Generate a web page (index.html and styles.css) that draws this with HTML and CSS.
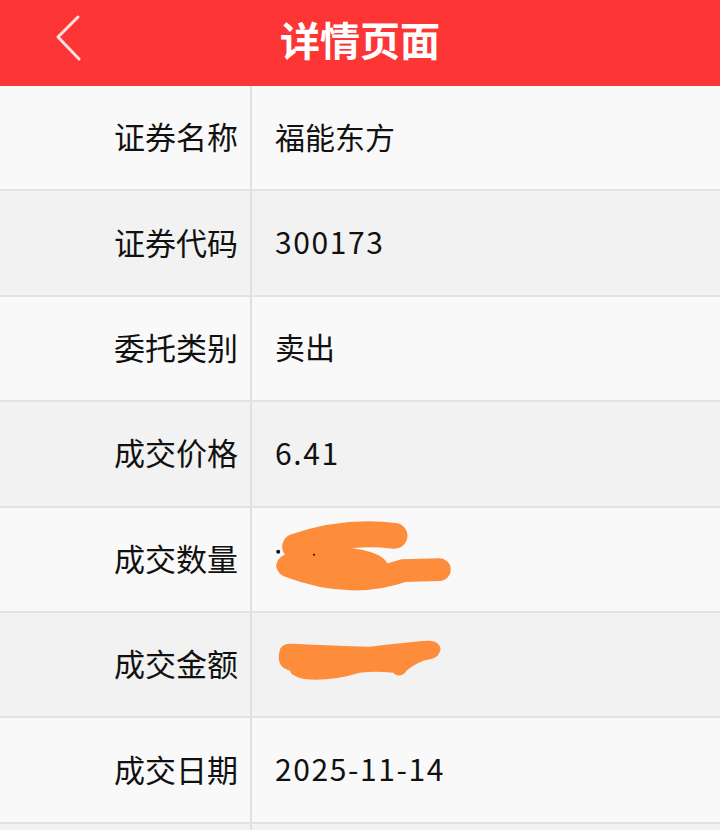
FILE: index.html
```html
<!DOCTYPE html>
<html lang="zh-CN">
<head>
    <meta charset="UTF-8">
    <meta name="viewport" content="width=device-width, initial-scale=1.0">
    <title>详情页面</title>
    <link rel="stylesheet" href="styles.css">
</head>
<body>
    <!-- Top bar -->
    <div class="header">
        <a href="javascript:void(0);" class="back">
            <svg width="40" height="54" viewBox="0 0 40 54">
                <polyline points="28,5 8,25 29,47" fill="none" stroke="#fde2e2" stroke-width="3" stroke-linecap="round" stroke-linejoin="round"/>
            </svg>
        </a>
        <h1>详情页面</h1>
        <div></div>
    </div>

    <!-- Detail rows -->
    <div class="details">
        <div class="row">
            <div class="label">证券名称</div>
            <div class="value">福能东方</div>
        </div>
        <div class="row">
            <div class="label">证券代码</div>
            <div class="value num">300173</div>
        </div>
        <div class="row">
            <div class="label">委托类别</div>
            <div class="value">卖出</div>
        </div>
        <div class="row">
            <div class="label">成交价格</div>
            <div class="value num">6.41</div>
        </div>
        <div class="row">
            <div class="label">成交数量</div>
            <div class="value">
                <svg class="scribble" viewBox="0 0 466 104">
                    <path d="M41 39 Q90 22 141 28" fill="none" stroke="#fd8c3b" stroke-width="26" stroke-linecap="round"/>
                    <ellipse cx="78" cy="58" rx="56" ry="19" fill="#fd8c3b"/>
                    <path d="M34 58 Q95 82 150 63 L186 62" fill="none" stroke="#fd8c3b" stroke-width="23" stroke-linecap="round"/>
                    <circle cx="24" cy="44" r="2" fill="#111"/>
                    <circle cx="60" cy="47" r="1" fill="#111"/>
                </svg>
            </div>
        </div>
        <div class="row">
            <div class="label">成交金额</div>
            <div class="value">
                <svg class="scribble" viewBox="0 0 466 104">
                    <path d="M26 36 C30 30 36 31 39 31 Q80 33 116 34 Q150 30 173 28 C184 27 190 34 186 40 C184 46 178 46 170 48 Q160 52 153 58 C150 64 142 64 140 60 Q120 58 106 60 Q80 68 56 67 C44 66 36 62 36 58 C26 56 22 48 26 36 Z" fill="#fd8c3b"/>
                </svg>
            </div>
        </div>
        <div class="row">
            <div class="label">成交日期</div>
            <div class="value num">2025-11-14</div>
        </div>
        <div class="row">
            <div class="label"></div>
            <div class="value"></div>
        </div>
    </div>
</body>
</html>
```
FILE: styles.css
```css
body {
    margin: 0;
    font-family: "Noto Sans CJK SC", "Noto Sans", sans-serif;
    background-color: #f9f9f9;
    color: #111;
}

.header {
    height: 86px;
    background-color: #fe3535;
    display: grid;
    grid-template-columns: 1fr auto 1fr;
    align-items: center;
}

.header h1 {
    margin: 0 0 8px;
    color: #fff;
    font-size: 40px;
    font-weight: 700;
}

.back {
    display: flex;
    padding-left: 50px;
    margin-top: -8px;
}

.row {
    display: flex;
    height: 103.4px;
    border-bottom: 2px solid #e3e3e3;
    background-color: #f9f9f9;
}

.row:nth-child(even) {
    background-color: #f2f2f2;
}

.label {
    width: 238px;
    padding-right: 12px;
    padding-bottom: 4px;
    border-right: 2px solid #e0e0e0;
    display: flex;
    align-items: center;
    justify-content: flex-end;
    font-size: 31px;
}

.value {
    flex: 1;
    position: relative;
    display: flex;
    align-items: center;
    padding-left: 23px;
    padding-bottom: 4px;
    font-size: 30px;
}

.value.num {
    letter-spacing: 1.6px;
}

.scribble {
    position: absolute;
    left: 0;
    top: 0;
    width: 100%;
    height: 100%;
}
```
